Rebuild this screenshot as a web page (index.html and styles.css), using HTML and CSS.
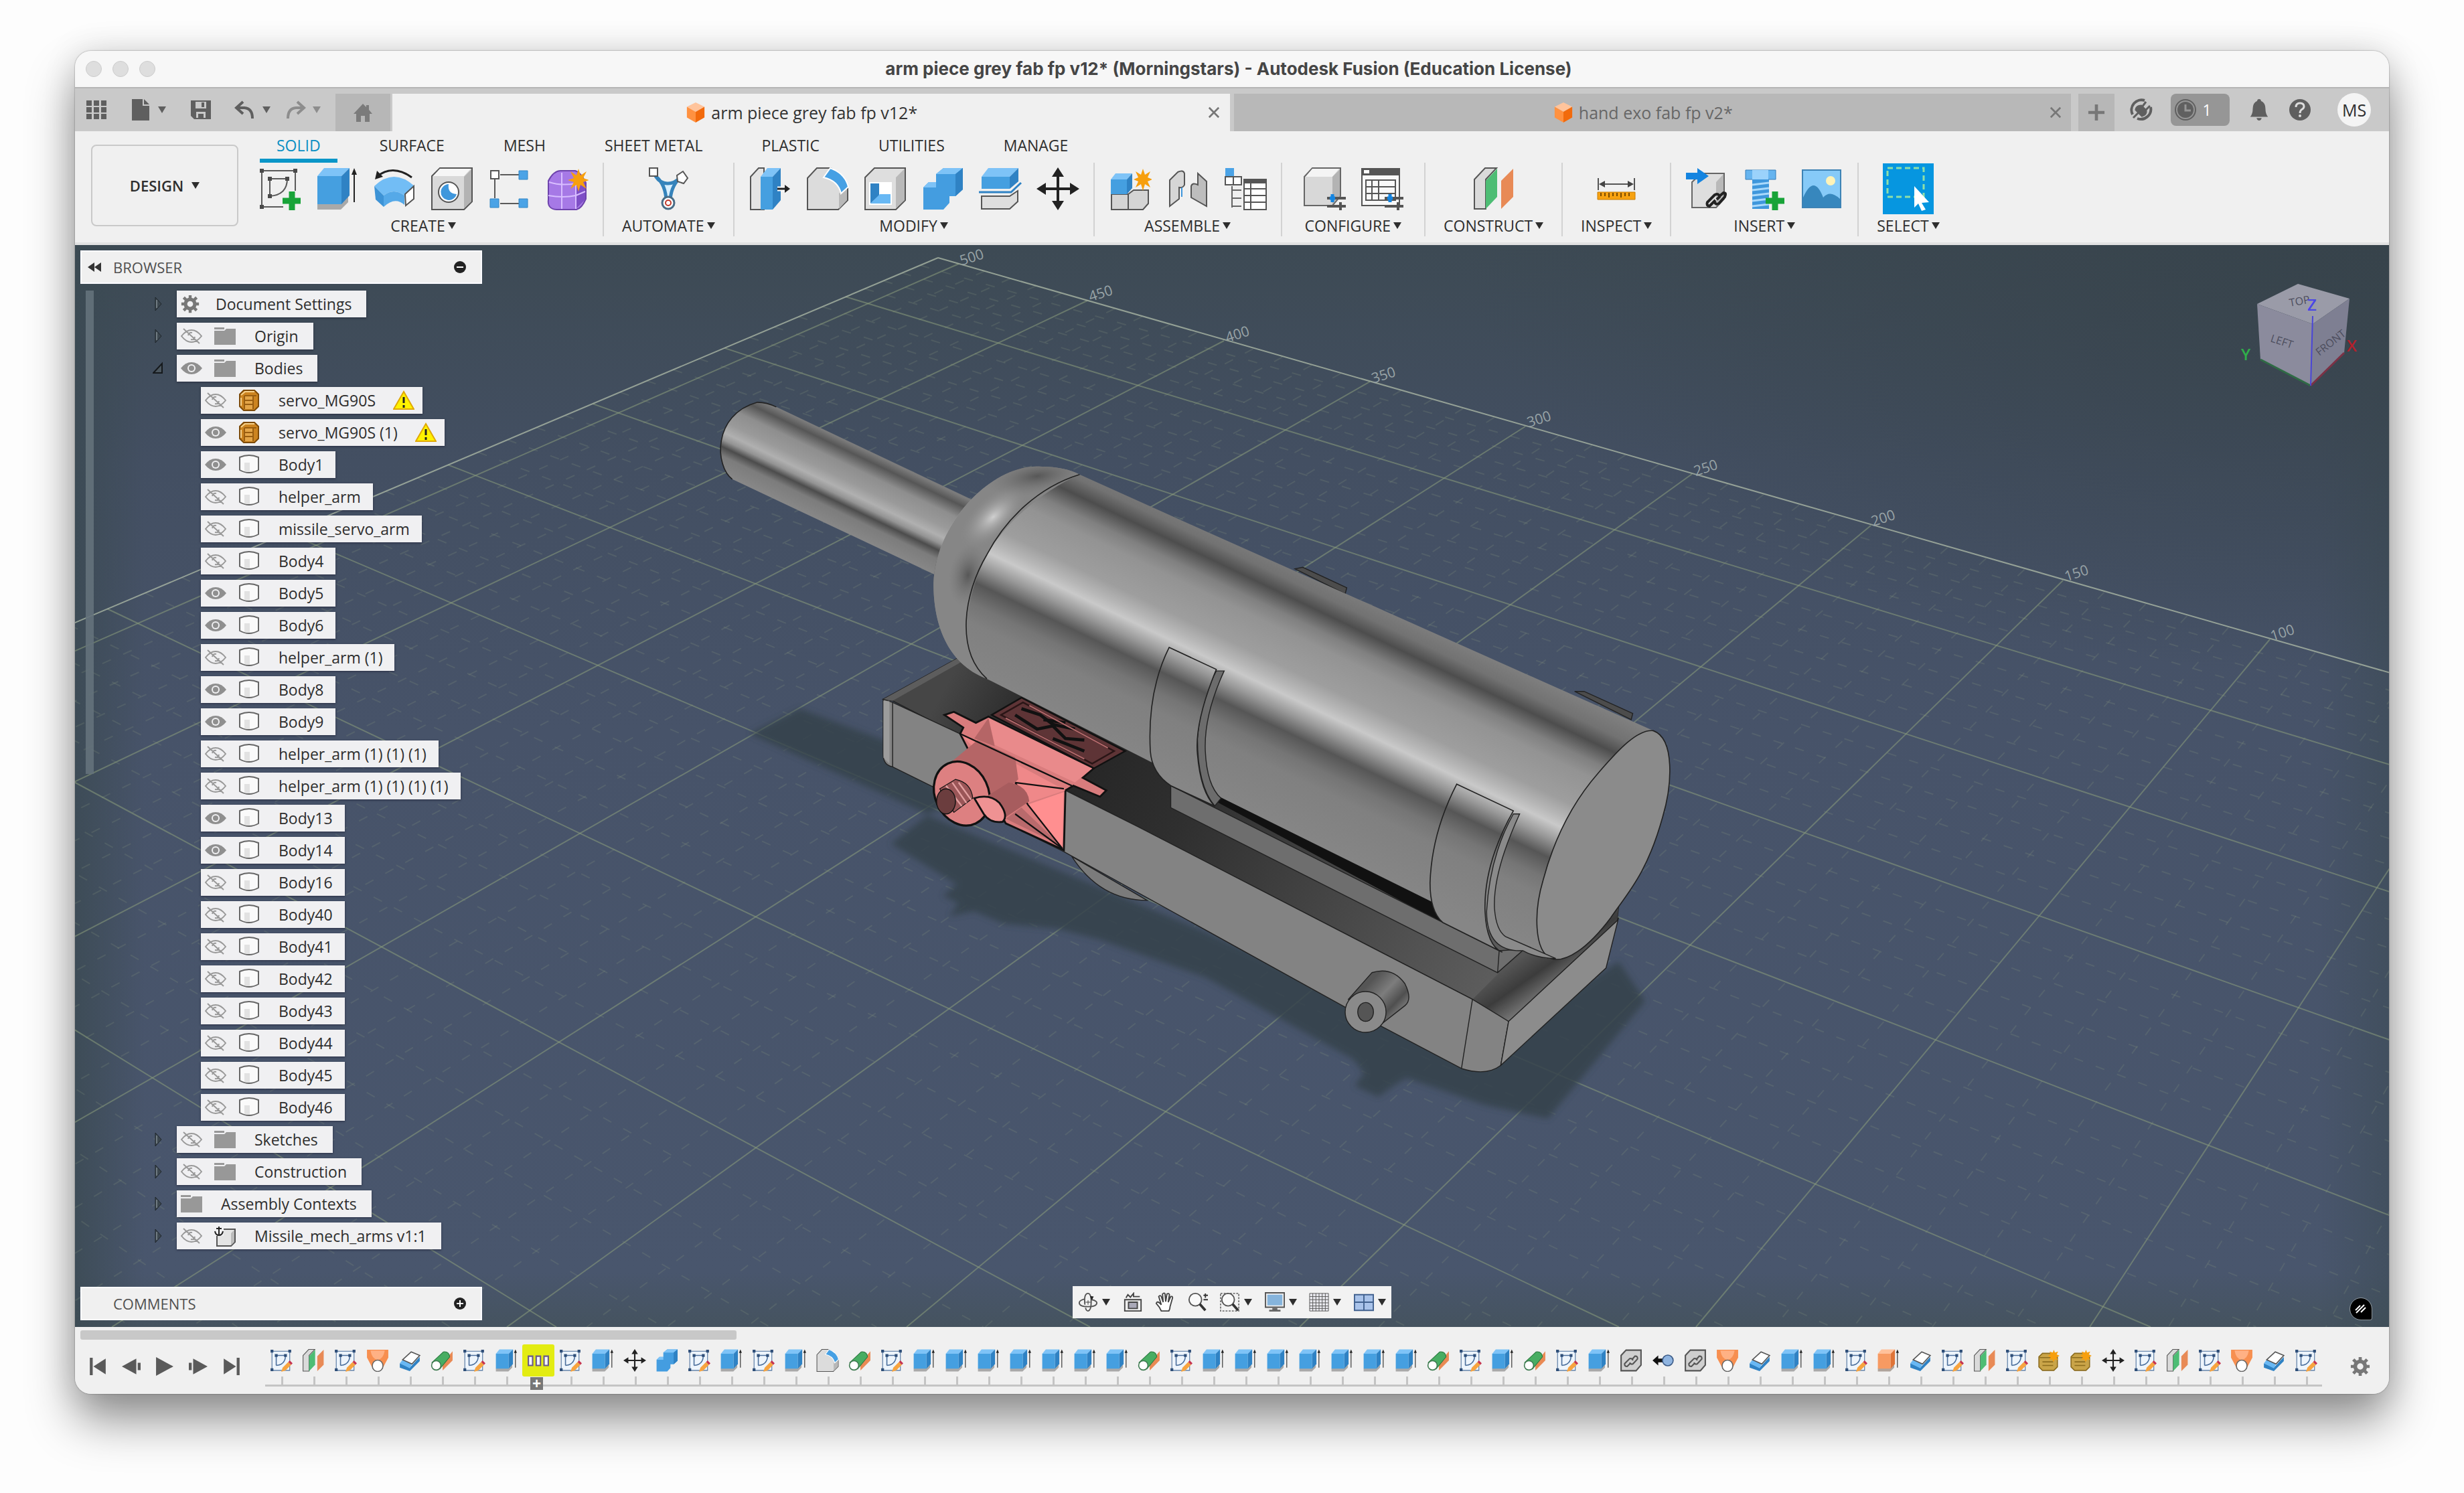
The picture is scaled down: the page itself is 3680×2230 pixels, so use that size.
FILE: index.html
```html
<!DOCTYPE html>
<html lang="en">

<head>
    <meta charset="UTF-8">
    <meta name="viewport" content="width=device-width, initial-scale=1.0">
    <title>Autodesk Fusion (Education License)</title>
    <link rel="stylesheet" href="styles.css">
    <script src="script.js" defer></script>
</head>

<body>
    <!-- icon sprite -->
    <svg class="sprite" aria-hidden="true">
        <symbol id="grid9" viewBox="0 0 32 32"><path fill="#5f5f5f" d="M1 2h8v8H1zM12 2h8v8h-8zM23 2h8v8h-8zM1 12h8v8H1zM12 12h8v8h-8zM23 12h8v8h-8zM1 22h8v8H1zM12 22h8v8h-8zM23 22h8v8h-8z"/></symbol>
        <symbol id="file" viewBox="0 0 32 32"><path fill="#5f5f5f" d="M3 0h16v10h10v22H3zM21 0l8 8h-8z"/></symbol>
        <symbol id="save" viewBox="0 0 32 32"><path fill="#5f5f5f" d="M1 2h30v28H6l-5-5z"/><path fill="#c9c9c9" d="M8 4h16v10H8zM9 19h14v9H9z"/><path fill="#5f5f5f" d="M17 5h4v7h-4zM12 22h8v6h-8z"/></symbol>
        <symbol id="undo" viewBox="0 0 32 32"><path d="M13 4L3 13l10 9M4 13h11q12 1 12 16" fill="none" stroke="currentColor" stroke-width="4"/></symbol>
        <symbol id="redo" viewBox="0 0 32 32"><path d="M19 4l10 9-10 9M28 13H17Q5 14 5 29" fill="none" stroke="currentColor" stroke-width="4"/></symbol>
        <symbol id="home" viewBox="0 0 32 32"><path fill="#7b7b7b" d="M16 3l5 5V5h4v7l5 6h-4v12h-7v-9h-6v9H6V18H2z"/></symbol>
        <symbol id="doc" viewBox="0 0 32 34"><path fill="#ffc49c" d="M16 1l14 7-14 8L2 8z"/><path fill="#ff9140" d="M2 8l14 8v17L2 25z"/><path fill="#f26a0c" d="M30 8l-14 8v17l14-8z"/></symbol>
        <symbol id="cross" viewBox="0 0 20 20"><path d="M2 2l16 16M18 2L2 18" stroke="#777" stroke-width="3"/></symbol>
        <symbol id="plus" viewBox="0 0 28 28"><path d="M14 1v26M1 14h26" stroke="#777" stroke-width="5"/></symbol>
        <symbol id="plug" viewBox="0 0 34 34"><path d="M31 13a15 15 0 0 1-20 17M4 24A15 15 0 0 1 22 3" fill="none" stroke="#5f5f5f" stroke-width="4"/><path d="M9 17l9 9q7-2 6-8l-7-7q-7 0-8 6zM18 13l6-8M23 18l7-7M5 29l7-7" fill="#5f5f5f" stroke="#5f5f5f" stroke-width="3"/></symbol>
        <symbol id="clock" viewBox="0 0 34 34"><circle cx="17" cy="17" r="15" fill="none" stroke="#606060" stroke-width="2"/><circle cx="17" cy="17" r="12" fill="#606060"/><path d="M17 9v9h8" fill="none" stroke="#969696" stroke-width="3"/></symbol>
        <symbol id="bell" viewBox="0 0 32 36"><path fill="#5f5f5f" d="M16 1q3 0 3 3 7 3 7 12 0 9 4 13H2q4-4 4-13 0-9 7-12 0-3 3-3zM12 31h8q-1 4-4 4t-4-4z"/></symbol>
        <symbol id="help" viewBox="0 0 34 34"><circle cx="17" cy="17" r="16" fill="#5f5f5f"/><path d="M11 13q0-6 6-6t6 5q0 3-4 5-2 2-2 5" fill="none" stroke="#dcdcdc" stroke-width="3"/><circle cx="17" cy="26" r="2" fill="#dcdcdc"/></symbol>

        <symbol id="sketch-new" viewBox="0 0 64 64"><path d="M6 5h50v30M6 5v54h32M18 17h26M18 17v26q26-2 26-26" fill="none" stroke="#5a5a5a" stroke-width="2"/><path fill="#4a4a4a" d="M3 2h6v6H3zM53 2h6v6h-6zM3 56h6v6H3zM15 14h6v6h-6zM41 14h6v6h-6zM15 40h6v6h-6z"/><path d="M51 36v28M37 50h28" stroke="#18a338" stroke-width="9"/></symbol>
        <symbol id="extrude" viewBox="0 0 64 64"><path fill="#a9a9a9" d="M3 54h34l12-12v10L38 63H3z"/><path fill="#459fe0" d="M3 13h36v42H3z"/><path fill="#7ec3f7" d="M3 13L13 1h38L39 13z"/><path fill="#2f82c4" d="M39 13L51 1v41L39 55z"/><path d="M58 52V6" stroke="#222" stroke-width="2"/><path d="M54 11l4-10 4 10z" fill="#222"/></symbol>
        <symbol id="extrude-cut" viewBox="0 0 64 64"><path fill="#b0a49c" d="M3 54h34l12-12v10L38 63H3z"/><path fill="#f79a62" d="M3 13h36v42H3z"/><path fill="#ffc19b" d="M3 13L13 1h38L39 13z"/><path fill="#df7438" d="M39 13L51 1v41L39 55z"/><path d="M58 52V6" stroke="#222" stroke-width="2"/><path d="M54 11l4-10 4 10z" fill="#222"/></symbol>
        <symbol id="revolve" viewBox="0 0 64 64"><path fill="#72bdf5" d="M2 28q29-28 60 0L47 42q-16-12-31 0z"/><path fill="#3d93d6" d="M2 28l14 14v17L4 48z"/><path fill="#55a9e8" d="M16 42q15-12 31 0v14q-14-13-31 3z"/><path fill="#fff" stroke="#555" stroke-width="2" d="M48 40l13-12v19L49 57z"/><path d="M7 13Q30-5 58 15" fill="none" stroke="#222" stroke-width="3"/><path d="M3 18l3-13 9 9z" fill="#222"/></symbol>
        <symbol id="hole" viewBox="0 0 64 64"><path fill="#d9d9d9" stroke="#555" stroke-width="2" d="M2 13L14 1h48v50L50 63H2z"/><path fill="#f6f6f6" d="M4 13L14 2h46L50 13z"/><path fill="#b3b3b3" d="M50 14L61 3v48L50 61z"/><circle cx="27" cy="37" r="15" fill="#fff" stroke="#555" stroke-width="2"/><path fill="#3f97dc" d="M27 25a12 12 0 1 0 12 15q-14-1-12-15z"/></symbol>
        <symbol id="pattern" viewBox="0 0 64 64"><path d="M10 18v28M18 11h28M18 54h28" stroke="#5a5a5a" stroke-width="2"/><path fill="#fff" stroke="#555" stroke-width="2" d="M4 5h12v12H4z"/><path fill="#4ba3e6" stroke="#3386c4" d="M46 5h13v13H46zM3 47h13v13H3zM46 47h13v13H46z"/></symbol>
        <symbol id="form" viewBox="0 0 64 64"><path fill="#a679e6" stroke="#6d43ac" stroke-width="2" d="M4 20Q12 5 22 5h22q8 2 16 18v24q-6 14-14 16H16Q2 62 4 48z"/><path fill="#7e4fc6" d="M45 26l14-6v28l-14 14z"/><path d="M5 22q18 6 40 2v38M24 8v54M4 42q22 4 41 0l14-6" fill="none" stroke="#d8bdff" stroke-width="2"/><path fill="#f79f0e" d="M49 2l3 10 9-6-5 10 9 3-9 3 5 10-9-6-3 10-3-10-9 6 5-10-9-3 9-3-5-10 9 6z"/></symbol>
        <symbol id="automate" viewBox="0 0 64 64"><path d="M13 13q8 12 19 11 9 0 17-8-14 14-14 36h-6Q29 26 13 13z" fill="#d8efff" stroke="#3583bb" stroke-width="5"/><path fill="#fff" stroke="#555" stroke-width="2" d="M4 1h12v12H4zM54 6l7 10-6 8-9-3-1-9z"/><circle cx="32" cy="53" r="9" fill="#fff" stroke="#4a6d87" stroke-width="3"/><circle cx="32" cy="53" r="4" fill="#fff" stroke="#c0392b" stroke-width="2"/></symbol>
        <symbol id="press" viewBox="0 0 64 64"><path fill="#e4e4e4" stroke="#555" stroke-width="2" d="M3 14L15 1h8v62H3z"/><path fill="#459fe0" d="M18 14h18v49H18z"/><path fill="#7ec3f7" d="M18 14L28 1h20L36 14z"/><path fill="#2f82c4" d="M36 14L48 1v48L36 63z"/><path d="M43 32h12" stroke="#fff" stroke-width="7"/><path d="M43 32h14" stroke="#222" stroke-width="3"/><path fill="#222" d="M54 26l8 6-8 6z"/></symbol>
        <symbol id="fillet" viewBox="0 0 64 64"><path fill="#dcdcdc" stroke="#555" stroke-width="2" d="M2 16L16 1h20q22 10 26 28v20L48 63H2z"/><path fill="#b8b8b8" d="M49 39l12-10v20L49 62z"/><path fill="#46a0e4" stroke="#fff" stroke-width="2" d="M26 15L36 1q22 8 27 28L52 39Q48 20 26 15z"/></symbol>
        <symbol id="shell" viewBox="0 0 64 64"><path fill="#dedede" stroke="#555" stroke-width="2" d="M2 15L16 1h46v48L48 63H2z"/><path fill="#b9b9b9" d="M48 15L61 2v47L48 61z"/><path fill="#fff" d="M8 22h34v34H8z"/><path fill="#2f82c4" d="M10 24h13v18l-13 12z"/><path fill="#68b8f4" d="M10 54l14-14h16v14z"/></symbol>
        <symbol id="combine" viewBox="0 0 64 64"><path fill="#449de0" d="M3 30l8-8h11V10l11-9h29v32l-11 10H42v10L33 63H3z"/><path fill="#7ec3f7" d="M22 10l11-9h29l-11 9zM3 30l8-8h11v8z"/><path fill="#2f82c4" d="M51 10l11-9v32l-11 10z"/></symbol>
        <symbol id="split" viewBox="0 0 64 64"><path fill="#dedede" stroke="#555" stroke-width="2" d="M4 43h42l12-8v16L46 62H4z"/><path fill="#459fe0" d="M4 14h42v18H4z"/><path fill="#7ec3f7" d="M4 14L14 1h45L46 14z"/><path fill="#2f82c4" d="M46 14L59 1v20L46 32z"/><path d="M0 37h48l15-14" fill="none" stroke="#2f82c4" stroke-width="3"/></symbol>
        <symbol id="move" viewBox="0 0 64 64"><path d="M32 10v44M10 32h44" stroke="#222" stroke-width="4"/><path fill="#222" d="M32 0l9 14H23zM32 64l9-14H23zM0 32l14-9v18zM64 32l-14-9v18z"/></symbol>
        <symbol id="component" viewBox="0 0 64 64"><path fill="#d4d4d4" stroke="#555" stroke-width="2" d="M4 40h25l8-6h22v20l-8 9H4zM29 40v23"/><path fill="#459fe0" d="M3 18h24v22H3z"/><path fill="#7ec3f7" d="M3 18l7-9h25l-8 9z"/><path fill="#2f82c4" d="M27 18l8-9v22l-8 9z"/><path fill="#f79f0e" d="M51 2l3 9 8-5-4 9 7 3-7 3 4 9-8-5-3 10-3-10-8 5 4-9-7-3 7-3-4-9 8 5z"/></symbol>
        <symbol id="joint" viewBox="0 0 64 64"><path fill="#d6d6d6" stroke="#555" stroke-width="2" d="M5 19l12-12q8-4 10 2v17q-2 5-8 4v17L5 58z"/><path fill="#bdbdbd" stroke="#555" stroke-width="2" d="M60 58V21L47 9v17q-8-4-10 2v17z"/><path d="M23 30v14" stroke="#3f97dc" stroke-width="2"/></symbol>
        <symbol id="bom" viewBox="0 0 64 64"><path fill="#4ba3e6" d="M2 1h13v13H2z"/><path fill="#fff" stroke="#555" stroke-width="2" d="M2 14h12v12H2zM14 14h12v12H14z"/><path d="M12 28v32M12 34h14M12 46h14M12 58h14" stroke="#666" stroke-width="2"/><path fill="#fff" stroke="#555" stroke-width="2" d="M30 18h33v45H30zM40 20v42M30 32h32M30 42h32M30 52h32"/><path fill="#555" d="M29 17h35v7H29z"/></symbol>
        <symbol id="config" viewBox="0 0 64 64"><path fill="#d8d8d8" stroke="#666" stroke-width="2" d="M2 14L14 1h42v42L44 57H2z"/><path fill="#f4f4f4" d="M4 14L14 2h40L44 14z"/><path fill="#b3b3b3" d="M44 14L55 3v40L44 55z"/><path d="M36 46h28M36 58h28M56 52v12" stroke="#555" stroke-width="4"/><path d="M40 46h8M44 40v12" stroke="#1484e0" stroke-width="5"/></symbol>
        <symbol id="config-table" viewBox="0 0 64 64"><path fill="#f8f8f8" stroke="#555" stroke-width="2" d="M2 3h56v54H2z"/><path fill="#555" d="M1 1h58v11H1z"/><path fill="#fff" d="M5 4h8v5H5z"/><path d="M8 19h44v30H8zM8 29h44M8 39h44M17 19v30M27 19v30" fill="none" stroke="#555" stroke-width="2"/><path d="M36 46h28M36 58h28M56 52v12" stroke="#555" stroke-width="4"/><path d="M40 46h8M44 40v12" stroke="#1484e0" stroke-width="5"/></symbol>
        <symbol id="plane" viewBox="0 0 64 64"><path fill="#dadada" stroke="#555" stroke-width="2" d="M3 18L19 1h17L20 18v44H3z"/><path fill="#4dbd74" d="M20 20L37 2v42L20 62z"/><path fill="#e88a56" d="M43 20L61 2v42L43 62z"/></symbol>
        <symbol id="measure" viewBox="0 0 64 64"><path d="M5 16v18M59 16v18M8 25h48" stroke="#555" stroke-width="2"/><path fill="#444" d="M6 25l9-5v10zM58 25l-9-5v10z"/><path fill="#f7a211" stroke="#c77a00" d="M4 37h56v11H4z"/><path d="M9 38v5M15 38v5M21 38v7M27 38v5M33 38v5M39 38v7M45 38v5M51 38v5" stroke="#7a4b00" stroke-width="2"/></symbol>
        <symbol id="derive" viewBox="0 0 64 64"><path fill="#dedede" stroke="#666" stroke-width="2" d="M10 22L24 9h34v38L46 60H10z"/><path fill="#b9b9b9" d="M46 22l11-12v37L46 58z"/><path fill="#1484e0" d="M1 8h17V1l17 12-17 12v-7H1z"/><path d="M45 49l-9 9q-5-1-3-6l11-11q6-3 7 3l-4 4M44 52q1 4 6 2l9-10q3-6-2-6l-6 5" fill="none" stroke="#222" stroke-width="4"/></symbol>
        <symbol id="bolt" viewBox="0 0 64 64"><path fill="#66b4ef" stroke="#347db8" d="M4 4h45v14H4z"/><path fill="#9bd2fb" d="M14 4h24v14H14z"/><path fill="#3f97dc" d="M14 18h25v44H14z"/><path d="M14 26l25-3M14 34l25-3M14 42l25-3M14 50l25-3M14 58l25-3" stroke="#a9d9fb" stroke-width="3"/><path d="M48 36v28M34 50h28" stroke="#18a338" stroke-width="9"/></symbol>
        <symbol id="picture" viewBox="0 0 64 64"><path fill="#86caf8" stroke="#3d83b5" stroke-width="2" d="M3 4h57v56H3z"/><circle cx="45" cy="20" r="7" fill="#fff3b8"/><path fill="#3787bd" d="M4 45q16-36 30 0 10-12 25 2v12H4z"/></symbol>
        <symbol id="select" viewBox="0 0 76 76"><path fill="#0696e0" d="M0 0h76v76H0z"/><path d="M7 7h54v43H7z" fill="none" stroke="#8fdfa8" stroke-width="3" stroke-dasharray="8 5"/><path fill="#fff" d="M47 34l22 24-11 1 6 10-6 2-5-11-6 6z"/></symbol>

        <symbol id="sketch" viewBox="0 0 64 64"><path fill="#eef5fc" stroke="#4b6f9c" stroke-width="2" d="M6 6h50v54H6z"/><path d="M18 18h26M18 18v28M18 46q26-2 26-28" fill="none" stroke="#4b6f9c" stroke-width="3"/><path fill="#2e4e78" d="M2 2h8v8H2zM52 2h8v8h-8zM2 54h8v8H2zM14 14h8v8h-8zM40 14h8v8h-8z"/><path fill="#f7a440" d="M36 52l16-16 8 8-16 16-12 4z"/><path fill="#c63350" d="M52 36l4-4 8 8-4 4z"/></symbol>
        <symbol id="loft" viewBox="0 0 64 64"><path fill="#f78f50" d="M2 2h60v22L46 54H18L2 24z"/><path fill="#ffb184" d="M12 4h40q-4 24-20 26Q16 28 12 4z"/><ellipse cx="32" cy="47" rx="15" ry="16" fill="#fff" stroke="#666" stroke-width="3"/></symbol>
        <symbol id="thicken" viewBox="0 0 64 64"><path fill="#2f82c4" d="M4 40l28 12 28-30v12L32 62 4 52z"/><path fill="#68b8f4" d="M4 40l8-10 26 12-6 12z"/><path fill="#fff" stroke="#555" stroke-width="3" d="M12 30L36 8l24 10-22 24z"/></symbol>
        <symbol id="axis" viewBox="0 0 64 64"><path fill="#e98a54" d="M34 40L62 6v26L34 60z"/><path fill="#48ad62" stroke="#2b7b40" stroke-width="2" d="M4 38L36 8q16-2 18 14L26 56z"/><circle cx="16" cy="46" r="13" fill="#fff" stroke="#3d7a50" stroke-width="3"/></symbol>
        <symbol id="link" viewBox="0 0 64 64"><path fill="#cfcfcf" stroke="#555" stroke-width="4" d="M4 18L18 3h42v42L46 61H4z"/><path d="M30 40l-9 9q-8 0-7-8l14-14q8-2 9 5M34 30l9-10q8-1 7 8L37 42q-6 2-9-4" fill="none" stroke="#555" stroke-width="4"/></symbol>
        <symbol id="snap" viewBox="0 0 64 64"><path fill="#111" d="M2 32l16-14v9h14v10H18v9z"/><circle cx="45" cy="32" r="15" fill="#8fb4e0" stroke="#3b5a86" stroke-width="3"/></symbol>
        <symbol id="base" viewBox="0 0 64 64"><path fill="#c9a448" stroke="#8c6c1e" stroke-width="3" d="M4 22l10-10h30l12 10v28L46 60H14L4 50z"/><path d="M6 24h48M14 36h30M14 46h30" stroke="#8c6c1e" stroke-width="3"/><path fill="#f79f0e" d="M46 2l3 8 9-3-4 8 8 4-8 4 3 8-8-3-4 8-4-8-8 3 4-8-8-4 8-4-3-8 9 3z"/></symbol>
        <symbol id="repeat" viewBox="0 0 64 64"><path fill="#f7f7ff" stroke="#6a5a8a" stroke-width="4" d="M4 20h12v26H4zM26 20h12v26H26zM48 20h12v26H48z"/></symbol>

        <symbol id="eye" viewBox="0 0 32 32"><path fill="#8f8f8f" d="M0 16Q7 7 16 7t16 9q-7 9-16 9T0 16z"/><circle cx="16" cy="16" r="6" fill="#f0f0f2"/><circle cx="16" cy="16" r="4" fill="#8f8f8f"/></symbol>
        <symbol id="eye-off" viewBox="0 0 32 32"><path d="M1 16q7-9 15-9t15 9q-7 9-15 9T1 16zM11 15q1-5 6-4M21 17q-1 5-6 4M4 5l24 22" fill="none" stroke="#999" stroke-width="2"/></symbol>
        <symbol id="folder" viewBox="0 0 32 32"><path fill="#989898" d="M0 3h15v3H0zM0 8h15l3-3h14v24H0z"/></symbol>
        <symbol id="gear" viewBox="0 0 32 32"><circle cx="16" cy="16" r="8" fill="none" stroke="#777" stroke-width="6"/><path d="M16 1v6M16 25v6M1 16h6M25 16h6M5 5l5 5M22 22l5 5M27 5l-5 5M10 22l-5 5" stroke="#777" stroke-width="5"/></symbol>
        <symbol id="body" viewBox="0 0 32 32"><path fill="#fafafa" stroke="#666" stroke-width="2" d="M2 5q14-6 28 0v19q-14 8-28 0z"/><path fill="#e2e2e2" d="M9 13h8v14q-5 0-8-1z"/></symbol>
        <symbol id="mesh" viewBox="0 0 32 32"><path fill="#cc8420" stroke="#7d4a08" stroke-width="2" d="M8 1h16l6 6v18l-6 6H8l-6-6V7z"/><path fill="#e3a548" d="M9 9h13v20H9z"/><path d="M9 9h18M9 9v20M9 16h13M9 22h13M22 9v20" fill="none" stroke="#9a5e10" stroke-width="2"/><path d="M4 8l6-5h14M4 12v12" fill="none" stroke="#f7d28c" stroke-width="2"/></symbol>
        <symbol id="ground" viewBox="0 0 32 32"><path fill="#e4e4e4" stroke="#555" stroke-width="2" d="M4 12l6-6h21v19l-6 6H4z"/><path fill="#bbb" d="M25 12l5-5v18l-5 5z"/><path fill="#f0f0f2" d="M0 0h14v16H0z"/><path d="M7 2v13M3 5h8M1 9q1 6 6 6t6-6" fill="none" stroke="#222" stroke-width="2"/></symbol>
        <symbol id="warn" viewBox="0 0 32 32"><path fill="#fff200" stroke="#e0a800" stroke-width="2" d="M16 3l15 26H1z"/><path d="M16 11v9M16 23v4" stroke="#222" stroke-width="3"/></symbol>
        <symbol id="closed" viewBox="0 0 16 24"><path d="M4 2l9 10-9 10z" fill="#3c474f" stroke="#1f262b"/><path d="M6 6v12" stroke="#a4b0b5"/></symbol>
        <symbol id="opened" viewBox="0 0 16 24"><path d="M14 5v14H1z" fill="#4a555d" stroke="#15191c" stroke-width="2"/></symbol>
        <symbol id="rewind" viewBox="0 0 20 16"><path fill="#333" d="M10 1v14L0 8zM20 1v14L10 8z"/></symbol>
        <symbol id="minus-dot" viewBox="0 0 20 20"><circle cx="10" cy="10" r="9" fill="#222"/><path d="M5 10h10" stroke="#fff" stroke-width="2"/></symbol>
        <symbol id="plus-dot" viewBox="0 0 20 20"><circle cx="10" cy="10" r="9" fill="#222"/><path d="M5 10h10M10 5v10" stroke="#fff" stroke-width="2"/></symbol>

        <symbol id="first" viewBox="0 0 26 26"><path fill="#5a5a5a" d="M2 1h4v24H2zM24 2v22L7 13z"/></symbol>
        <symbol id="back" viewBox="0 0 26 26"><path fill="#5a5a5a" d="M20 2v22L0 13zM22 8h4v10h-4z"/></symbol>
        <symbol id="play" viewBox="0 0 26 26"><path fill="#5a5a5a" d="M1 0l24 13L1 26z"/></symbol>
        <symbol id="next" viewBox="0 0 26 26"><path fill="#5a5a5a" d="M6 2v22l20-11zM0 8h4v10H0z"/></symbol>
        <symbol id="last" viewBox="0 0 26 26"><path fill="#5a5a5a" d="M20 1h4v24h-4zM2 2v22l17-11z"/></symbol>

        <symbol id="orbit" viewBox="0 0 32 32"><path d="M22 12q8 2 8 5 0 6-14 6T2 17q0-4 8-6" fill="none" stroke="#555" stroke-width="2"/><path d="M11 20q-2-18 5-18 5 0 5 14 0 13-5 14-3 0-4-5" fill="none" stroke="#555" stroke-width="2"/><path d="M16 13v7M12 16h8" stroke="#333"/><path fill="#222" d="M19 6l6 1-3 6z"/></symbol>
        <symbol id="look" viewBox="0 0 32 32"><path d="M3 12h26v18H3z" fill="#eee" stroke="#444" stroke-width="2"/><path d="M9 16h14v10H9z" fill="#aaa9b8" stroke="#444" stroke-width="2"/><path d="M5 9l3-5 4 4 5-6v5h10" fill="none" stroke="#444" stroke-width="2"/></symbol>
        <symbol id="hand" viewBox="0 0 32 32"><path d="M10 30q-3-7-8-12 1-4 5-1l3 3L6 7q2-3 4 0l3 9-1-13q3-3 4 0l1 12 2-12q3-2 4 1l-2 12 4-9q3-1 3 2l-4 14q0 4-2 7z" fill="#fff" stroke="#444" stroke-width="2"/></symbol>
        <symbol id="zoom" viewBox="0 0 32 32"><circle cx="12" cy="12" r="10" fill="#fafafa" stroke="#555" stroke-width="2"/><path d="M19 19l9 10" stroke="#333" stroke-width="4"/><path d="M25 5h7M28 2v7M25 12h7" stroke="#333" stroke-width="2"/></symbol>
        <symbol id="fit" viewBox="0 0 32 32"><path d="M1 2h29v28H1z" fill="none" stroke="#777" stroke-width="2" stroke-dasharray="3 2"/><circle cx="13" cy="12" r="10" fill="#fafafa" stroke="#555" stroke-width="2"/><path d="M20 19l9 10" stroke="#333" stroke-width="4"/></symbol>
        <symbol id="display" viewBox="0 0 32 32"><path d="M1 1h30v23H1z" fill="#eee" stroke="#555" stroke-width="2"/><path d="M4 4h24v17H4z" fill="#86b4dc"/><path d="M12 25h8v3h5v3H7v-3h5z" fill="#666"/></symbol>
        <symbol id="mesh-grid" viewBox="0 0 32 32"><path fill="#e9e9ee" d="M1 2h30v28H1z"/><path d="M1 2h30v28H1zM6 2v28M11 2v28M16 2v28M21 2v28M26 2v28M1 7h30M1 12h30M1 17h30M1 22h30M1 26h30" fill="none" stroke="#555"/></symbol>
        <symbol id="views" viewBox="0 0 32 32"><path d="M1 4h30v25H1zM16 4v25M1 16h30" fill="#a9c3ea" stroke="#41618f" stroke-width="2"/></symbol>
    </svg>

    <main class="window">
        <header class="titlebar">
            <div class="lights"><i></i><i></i><i></i></div>
            <h1>arm piece grey fab fp v12* (Morningstars) - Autodesk Fusion (Education License)</h1>
        </header>

        <div class="strip">
            <div class="quick">
                <button type="button" aria-label="Data panel"><svg><use href="#grid9"/></svg></button>
                <button type="button" class="drop" aria-label="File"><svg><use href="#file"/></svg><b class="caret"></b></button>
                <button type="button" aria-label="Save"><svg><use href="#save"/></svg></button>
                <button type="button" class="step" aria-label="Undo"><svg><use href="#undo"/></svg><b class="caret"></b></button>
                <button type="button" class="step dim" aria-label="Redo"><svg><use href="#redo"/></svg><b class="caret"></b></button>
            </div>
            <button type="button" class="tile home" aria-label="Home"><svg><use href="#home"/></svg></button>
            <div class="file-tab active">
                <svg class="doc"><use href="#doc"/></svg><span>arm piece grey fab fp v12*</span>
                <button type="button" class="close" aria-label="Close"><svg><use href="#cross"/></svg></button>
            </div>
            <div class="file-tab">
                <svg class="doc"><use href="#doc"/></svg><span>hand exo fab fp v2*</span>
                <button type="button" class="close" aria-label="Close"><svg><use href="#cross"/></svg></button>
            </div>
            <button type="button" class="tile new" aria-label="New design"><svg><use href="#plus"/></svg></button>
            <div class="account">
                <button type="button" aria-label="Extensions"><svg><use href="#plug"/></svg></button>
                <button type="button" class="jobs"><svg><use href="#clock"/></svg>1</button>
                <button type="button" aria-label="Notifications"><svg><use href="#bell"/></svg></button>
                <button type="button" aria-label="Help"><svg><use href="#help"/></svg></button>
                <button type="button" class="avatar">MS</button>
            </div>
        </div>

        <div class="toolbar">
            <button type="button" class="workspace">DESIGN <b class="caret"></b></button>
            <div class="ribbon">
                <nav class="tabs">
                    <a href="#" class="on">SOLID</a>
                    <a href="#">SURFACE</a>
                    <a href="#">MESH</a>
                    <a href="#">SHEET METAL</a>
                    <a href="#">PLASTIC</a>
                    <a href="#">UTILITIES</a>
                    <a href="#">MANAGE</a>
                </nav>
                <div class="groups">
                    <div class="group">
                        <div class="icons">
                            <button type="button" aria-label="Create sketch"><svg><use href="#sketch-new"/></svg></button>
                            <button type="button" aria-label="Extrude"><svg><use href="#extrude"/></svg></button>
                            <button type="button" aria-label="Revolve"><svg><use href="#revolve"/></svg></button>
                            <button type="button" aria-label="Hole"><svg><use href="#hole"/></svg></button>
                            <button type="button" aria-label="Pattern"><svg><use href="#pattern"/></svg></button>
                            <button type="button" aria-label="Create form"><svg><use href="#form"/></svg></button>
                        </div>
                        <button type="button" class="menu">CREATE<b class="caret"></b></button>
                    </div>
                    <div class="group">
                        <div class="icons"><button type="button" aria-label="Automated modeling"><svg><use href="#automate"/></svg></button></div>
                        <button type="button" class="menu">AUTOMATE<b class="caret"></b></button>
                    </div>
                    <div class="group">
                        <div class="icons">
                            <button type="button" aria-label="Press pull"><svg><use href="#press"/></svg></button>
                            <button type="button" aria-label="Fillet"><svg><use href="#fillet"/></svg></button>
                            <button type="button" aria-label="Shell"><svg><use href="#shell"/></svg></button>
                            <button type="button" aria-label="Combine"><svg><use href="#combine"/></svg></button>
                            <button type="button" aria-label="Split body"><svg><use href="#split"/></svg></button>
                            <button type="button" aria-label="Move"><svg><use href="#move"/></svg></button>
                        </div>
                        <button type="button" class="menu">MODIFY<b class="caret"></b></button>
                    </div>
                    <div class="group">
                        <div class="icons">
                            <button type="button" aria-label="New component"><svg><use href="#component"/></svg></button>
                            <button type="button" aria-label="Joint"><svg><use href="#joint"/></svg></button>
                            <button type="button" aria-label="Bill of materials"><svg><use href="#bom"/></svg></button>
                        </div>
                        <button type="button" class="menu">ASSEMBLE<b class="caret"></b></button>
                    </div>
                    <div class="group roomy">
                        <div class="icons">
                            <button type="button" aria-label="Configure design"><svg><use href="#config"/></svg></button>
                            <button type="button" aria-label="Configuration table"><svg><use href="#config-table"/></svg></button>
                        </div>
                        <button type="button" class="menu">CONFIGURE<b class="caret"></b></button>
                    </div>
                    <div class="group">
                        <div class="icons"><button type="button" aria-label="Offset plane"><svg><use href="#plane"/></svg></button></div>
                        <button type="button" class="menu">CONSTRUCT<b class="caret"></b></button>
                    </div>
                    <div class="group">
                        <div class="icons"><button type="button" aria-label="Measure"><svg><use href="#measure"/></svg></button></div>
                        <button type="button" class="menu">INSPECT<b class="caret"></b></button>
                    </div>
                    <div class="group">
                        <div class="icons">
                            <button type="button" aria-label="Insert derive"><svg><use href="#derive"/></svg></button>
                            <button type="button" aria-label="Insert fastener"><svg><use href="#bolt"/></svg></button>
                            <button type="button" aria-label="Insert canvas"><svg><use href="#picture"/></svg></button>
                        </div>
                        <button type="button" class="menu">INSERT<b class="caret"></b></button>
                    </div>
                    <div class="group">
                        <div class="icons"><button type="button" class="big" aria-label="Select"><svg><use href="#select"/></svg></button></div>
                        <button type="button" class="menu">SELECT<b class="caret"></b></button>
                    </div>
                </div>
            </div>
        </div>

        <div class="viewport">
            <svg class="scene" viewBox="112 366 3456 1616" preserveAspectRatio="xMidYMid slice">
                <defs>
                    <linearGradient id="sky" x1="0" y1="0" x2="0" y2="1">
                        <stop offset="0" stop-color="#3d4a54"/><stop offset=".2" stop-color="#434f62"/><stop offset=".45" stop-color="#475369"/><stop offset=".95" stop-color="#49566d"/><stop offset="1" stop-color="#45535f"/>
                    </linearGradient>
                    <linearGradient id="side" x1="0" y1="0" x2="1" y2="0">
                        <stop offset="0" stop-color="#3b4a52" stop-opacity=".8"/><stop offset=".03" stop-color="#3b4a52" stop-opacity="0"/><stop offset=".97" stop-color="#3b4a52" stop-opacity="0"/><stop offset="1" stop-color="#3b4a52" stop-opacity=".5"/>
                    </linearGradient>
                    <radialGradient id="topRight" cx="1" cy="0" r=".4">
                        <stop offset="0" stop-color="#37434b"/><stop offset="1" stop-color="#37434b" stop-opacity="0"/>
                    </radialGradient>
                    <linearGradient id="tube" gradientUnits="userSpaceOnUse" x1="491" y1="258" x2="468" y2="306">
                        <stop offset="0" stop-color="#7b7b7b"/><stop offset=".1" stop-color="#565656"/><stop offset=".25" stop-color="#8e8e8e"/><stop offset=".42" stop-color="#9a9a9a"/><stop offset=".54" stop-color="#b0b0b0"/><stop offset=".62" stop-color="#949494"/><stop offset=".7" stop-color="#4c4c4c"/><stop offset=".8" stop-color="#7c7c7c"/><stop offset="1" stop-color="#888"/>
                    </linearGradient>
                    <linearGradient id="steel" gradientUnits="userSpaceOnUse" x1="1052" y1="466" x2="983" y2="610">
                        <stop offset="0" stop-color="#808080"/><stop offset=".08" stop-color="#727272"/><stop offset=".14" stop-color="#4d4d4d"/><stop offset=".21" stop-color="#808080"/><stop offset=".27" stop-color="#939393"/><stop offset=".4" stop-color="#9e9e9e"/><stop offset=".46" stop-color="#b6b6b6"/><stop offset=".5" stop-color="#c9c9c9"/><stop offset=".56" stop-color="#989898"/><stop offset=".63" stop-color="#565656"/><stop offset=".71" stop-color="#757575"/><stop offset=".78" stop-color="#808080"/><stop offset="1" stop-color="#868686"/>
                    </linearGradient>
                    <linearGradient id="deck" gradientUnits="userSpaceOnUse" x1="600" y1="440" x2="960" y2="640">
                        <stop offset="0" stop-color="#464646"/><stop offset=".16" stop-color="#222"/><stop offset=".42" stop-color="#2f2f2f"/><stop offset=".7" stop-color="#474747"/><stop offset="1" stop-color="#606060"/>
                    </linearGradient>
                    <linearGradient id="corner" gradientUnits="userSpaceOnUse" x1="972" y1="606" x2="990" y2="632">
                        <stop offset="0" stop-color="#555"/><stop offset=".45" stop-color="#3c3c3c"/><stop offset="1" stop-color="#808080"/>
                    </linearGradient>
                    <linearGradient id="peg" gradientUnits="userSpaceOnUse" x1="869" y1="628" x2="892" y2="650">
                        <stop offset="0" stop-color="#555"/><stop offset=".35" stop-color="#7d7d7d"/><stop offset=".65" stop-color="#4f4f4f"/><stop offset="1" stop-color="#999"/>
                    </linearGradient>
                    <radialGradient id="dome"><stop offset="0" stop-color="#cfcfcf"/><stop offset="1" stop-color="#8a8a8a" stop-opacity="0"/></radialGradient>
                    <radialGradient id="domeDark"><stop offset="0" stop-color="#575757"/><stop offset="1" stop-color="#777" stop-opacity="0"/></radialGradient>
                    <filter id="soft"><feGaussianBlur stdDeviation="2"/></filter>
                    <clipPath id="domeClip"><path d="M687 302C664 312 640 332 628 353C615 378 608 414 628 432C602 422 594 396 594 371C596 330 634 294 663 297Q677 297 687 302z"/></clipPath>
                </defs>
                <path fill="url(#sky)" d="M112 366h3456v1616H112z"/>
                <path fill="url(#side)" d="M112 366h3456v1616H112z"/>
                <path fill="url(#topRight)" d="M112 366h3456v1616H112z"/>
                <g id="gridLines"></g>
                <g transform="scale(2.347)">
                    <g id="gridLabels" class="grid-labels"></g>

                    <!-- cast shadows -->
                    <g fill="#36434b" opacity=".85" filter="url(#soft)">
                        <path d="M477 467L509 451L570 474L605 512L590 518z"/>
                        <path d="M567 537L590 519L760 590L940 670L1030 612L1047 637L985 712L944 703L895 686L887 691L877 698L862 691L868 683L861 674L767 622L700 598L672 591L639 588L620 580L604 583L610 575L600 570L609 563z"/>
                    </g>

                    <!-- mounting bar -->
                    <path fill="#7b7b7b" stroke="#222" stroke-width=".6" d="M682 545Q700 573 730 573z"/>
                    <path fill="url(#deck)" stroke="#222" stroke-width=".6" d="M562 445L611 418L760 470L1030 577L1029 586L960 650L937 636L568 446z"/>
                    <path fill="#5d5d5d" d="M562 445L611 418L614 420L568 446z"/>
                    <path fill="url(#corner)" d="M969 604L1030 577L1029 586L960 650L937 636z"/>
                    <path fill="#838383" stroke="#222" stroke-width=".6" d="M562 445L568 447L611 467L678 503L724 526L937 636L960 650L955 678Q946 685 930 680L856 641L677 542L568 488Q562 487 562 480z"/>
                    <path fill="#8c8c8c" stroke="#222" stroke-width=".6" d="M960 650L1029 586L1030 584L1022 616L955 678z"/>
                    <path d="M568 447v41M937 636L930 680" stroke="#222" stroke-width=".6"/>
                    <path fill="#b5b5b5" d="M562 446h4v40l-4-4z" opacity=".5"/>
                    <path fill="#111" d="M628 431L740 470L770 508L917 587L930 560L780 480z"/>
                    <path fill="#6e6e6e" stroke="#222" stroke-width=".6" d="M745 500L954 605L970 604L953 619L745 514zM954 605L953 619"/>

                    <!-- peg -->
                    <path fill="url(#peg)" stroke="#222" stroke-width=".6" d="M858 636L873 619Q886 615 894 626Q899 636 894 640L880 651z"/>
                    <ellipse cx="869" cy="644" rx="13" ry="13" fill="#8a8a8a" stroke="#222" stroke-width=".6"/>
                    <ellipse cx="869" cy="644" rx="5" ry="6" fill="#555" stroke="#222" stroke-width=".6"/>

                    <!-- tube and body -->
                    <path fill="url(#tube)" d="M466 305C455 297 453 264 482 256Q488 256 494 259L627 322L604 370z"/>
                    <path d="M466 305C455 297 453 264 482 256Q488 256 494 259" fill="none" stroke="#222" stroke-width=".7"/>
                    <path fill="#4c4c4c" stroke="#222" stroke-width=".6" d="M824 362l5-1 28 13-1 4zM1002 440l6 0 31 14-1 4z"/>
                    <path fill="url(#steel)" d="M687 302L767 338L1052 465L984 610L776 507L628 432C602 422 594 396 594 371C596 330 634 294 663 297Q677 297 687 302z"/>
                    <g clip-path="url(#domeClip)">
                        <path fill="#868686" d="M590 290h100v150H590z"/>
                        <ellipse cx="660" cy="303" rx="34" ry="12" fill="url(#domeDark)" transform="rotate(-8 660 303)"/>
                        <ellipse cx="632" cy="329" rx="26" ry="13" fill="url(#dome)" transform="rotate(-42 632 329)"/>
                        <ellipse cx="616" cy="366" rx="12" ry="20" fill="url(#domeDark)" transform="rotate(10 616 366)"/>
                    </g>
                    <path d="M687 302C661 310 640 330 628 353C613 378 608 414 628 432" fill="none" stroke="#222" stroke-width=".7"/>
                    <path fill="#8b8b8b" stroke="#222" stroke-width=".7" d="M1052 465C1066 470 1064 500 1058 520C1048 556 1036 568 1025 584C1010 604 996 613 987 610C976 605 976 580 982 560C990 530 1003 508 1017 492C1030 477 1042 464 1052 465z"/>

                    <!-- clips -->
                    <path fill="#6c6c6c" stroke="#222" stroke-width=".6" d="M774 427h5Q766 455 767 478Q768 500 777 508L773 513Q762 500 762 470Q764 445 774 427z"/>
                    <path fill="url(#steel)" stroke="#222" stroke-width=".7" d="M744 412L774 426Q760 460 762 480Q764 504 773 513L745 500Q733 492 732 478Q730 440 744 412z"/>
                    <path fill="#8a8a8a" stroke="#222" stroke-width=".6" d="M963 518h4Q950 555 951 578Q952 592 958 596L990 610Q978 610 969 605Q946 606 946 580Q948 545 963 518z"/>
                    <path fill="url(#steel)" stroke="#222" stroke-width=".7" d="M927 499L963 516Q944 550 945 580Q946 602 956 606L918 587Q910 580 910 562Q911 530 927 499z"/>

                    <!-- servo -->
                    <path fill="#5e3436" stroke="#111" d="M631 455L650 444L716 478L696 489z"/>
                    <path d="M637 455l14-8 58 31-14 8z" fill="none" stroke="#2a1516"/>
                    <path d="M650 451l12 4 8 6 14 3M646 455l14 9 10-2 8 8 12 1M664 458l14 2M670 470l20 8" fill="none" stroke="#111" stroke-width="2"/>
                    <path d="M640 457l50 26M655 449l50 27" fill="none" stroke="#b56b6d" stroke-width=".8"/>
                    <path fill="#d97c7d" stroke="#111" stroke-width="1.2" d="M601 455L607 453L621 460L629 456L696 489L689 495L704 503L700 507L683 500L678 503L677 541L640 524L611 467L613 463z"/>
                    <path fill="#e98a8b" d="M629 457L695 489L684 498L633 474z"/>
                    <path fill="#b56566" d="M620 470L629 457L633 475z"/>
                    <path fill="#ef8889" d="M611 467L678 503L654 511z"/>
                    <path fill="#ff8f90" d="M677 504L654 512L676 539z"/>
                    <path fill="#b96a6c" d="M650 514L675 538L640 521z"/>
                    <path fill="#b56566" d="M604 486L622 471L646 482L648 496L634 508z"/>
                    <path d="M611 467L682 500M646 498l31 4M646 498l8 14 22 28-30-22" fill="none" stroke="#111" stroke-width="1"/>
                    <ellipse cx="612" cy="505" rx="17" ry="21" fill="#dd8081" stroke="#111" stroke-width="1.4" transform="rotate(-25 612 505)"/>
                    <path fill="#a75c5e" d="M626 508L642 498Q654 500 655 510L640 520z"/>
                    <path fill="#ef9293" stroke="#111" stroke-width="1.2" d="M620 508q10-3 16 3 6 8 2 12-8 1-12-5z"/>
                    <path fill="#9b5658" stroke="#111" stroke-width=".5" d="M598 502l10-6q10 2 11 12l-12 9z"/>
                    <path d="M602 500l10 13M606 498l9 13M610 498l8 11" stroke="#e3a0a1"/>
                    <ellipse cx="602" cy="510" rx="6" ry="8" fill="#6b3d3e" stroke="#111" stroke-width=".6"/>
                </g>

                <!-- view cube -->
                <path fill="#9a9ba8" d="M3432 424L3509 446L3454 484L3371 454z"/>
                <path fill="#8b8b9d" d="M3371 454L3454 484L3451 576L3376 537z"/>
                <path fill="#7e7f92" d="M3454 484L3509 446L3501 527L3451 576z"/>
                <path d="M3376 537L3451 576" stroke="#2f6b45" stroke-width="3"/>
                <path d="M3501 527L3451 576" stroke="#7c3145" stroke-width="3"/>
                <path d="M3454 472L3451 576" stroke="#4a46d6" stroke-width="2"/>
                <g class="cube-text">
                    <text x="3420" y="458" transform="rotate(-10 3420 458)">TOP</text>
                    <text x="3390" y="510" transform="rotate(18 3390 510)">LEFT</text>
                    <text x="3464" y="532" transform="rotate(-38 3464 532)">FRONT</text>
                </g>
                <g class="axis-text">
                    <text x="3446" y="464" fill="#4a46e6">Z</text>
                    <text x="3347" y="538" fill="#2fae4a">Y</text>
                    <text x="3505" y="525" fill="#b3202c">X</text>
                </g>
            </svg>

            <aside class="panels">
                <div class="panel-head">
                    <button type="button" aria-label="Collapse"><svg><use href="#rewind"/></svg></button>
                    <h2>BROWSER</h2>
                    <button type="button" aria-label="Hide browser"><svg><use href="#minus-dot"/></svg></button>
                </div>
                <div class="browser">
                    <div class="rail"></div>
                    <ul id="tree"></ul>
                </div>
                <div class="panel-head comments">
                    <h2>COMMENTS</h2>
                    <button type="button" aria-label="Add comment"><svg><use href="#plus-dot"/></svg></button>
                </div>
            </aside>

            <div class="navbar">
                <button type="button" aria-label="Orbit"><svg><use href="#orbit"/></svg><b class="caret"></b></button>
                <button type="button" aria-label="Look at"><svg><use href="#look"/></svg></button>
                <button type="button" aria-label="Pan"><svg><use href="#hand"/></svg></button>
                <button type="button" aria-label="Zoom"><svg><use href="#zoom"/></svg></button>
                <button type="button" aria-label="Fit"><svg><use href="#fit"/></svg><b class="caret"></b></button>
                <button type="button" aria-label="Display settings"><svg><use href="#display"/></svg><b class="caret"></b></button>
                <button type="button" aria-label="Grid and snaps"><svg><use href="#mesh-grid"/></svg><b class="caret"></b></button>
                <button type="button" aria-label="Viewports"><svg><use href="#views"/></svg><b class="caret"></b></button>
            </div>
            <button type="button" class="assistant" aria-label="Assistant"><svg viewBox="0 0 32 32"><path d="M8 18l7-7M9 22l12-12M16 21l7-7" stroke="#fff" stroke-width="2"/></svg></button>
        </div>

        <footer class="timeline">
            <div class="scroll"></div>
            <div class="track">
                <div class="player">
                    <button type="button" aria-label="Start"><svg><use href="#first"/></svg></button>
                    <button type="button" aria-label="Step back"><svg><use href="#back"/></svg></button>
                    <button type="button" aria-label="Play"><svg><use href="#play"/></svg></button>
                    <button type="button" aria-label="Step forward"><svg><use href="#next"/></svg></button>
                    <button type="button" aria-label="End"><svg><use href="#last"/></svg></button>
                </div>
                <ol id="features"></ol>
                <button type="button" class="settings" aria-label="Timeline settings"><svg><use href="#gear"/></svg></button>
            </div>
        </footer>
    </main>
</body>

</html>
```
FILE: styles.css
```css
* {
    box-sizing: border-box;
}

body {
    margin: 0;
    height: 100vh;
    padding: 76px 112px 148px;
    background: #fdfdfd;
    font-family: "Open Sans", "Noto Sans", sans-serif;
    font-size: 23px;
    color: #2e2e2e;
    overflow: hidden;
}

h1, h2, ul, ol {
    margin: 0;
    padding: 0;
    font-weight: normal;
    list-style: none;
}

button {
    display: flex;
    align-items: center;
    justify-content: center;
    padding: 0;
    border: 0;
    background: none;
    font: inherit;
    color: inherit;
    cursor: pointer;
}

svg {
    display: block;
}

.sprite {
    position: absolute;
    width: 0;
    height: 0;
}

.caret {
    border: 6px solid transparent;
    border-top: 10px solid currentColor;
    border-bottom: 0;
}

.window {
    display: flex;
    flex-direction: column;
    height: 100%;
    border-radius: 24px;
    overflow: hidden;
    background: #f0f0f0;
    box-shadow: 0 0 2px rgba(0, 0, 0, .5), 0 0 50px rgba(0, 0, 0, .12), 0 40px 70px rgba(0, 0, 0, .42);
}

/* title bar */
.titlebar {
    display: flex;
    align-items: center;
    height: 56px;
    padding: 0 16px;
    background: #f7f7f7;
    border-bottom: 2px solid #b5b5b5;
}

.lights {
    display: flex;
    gap: 16px;
    width: 120px;
}

.lights i {
    width: 24px;
    height: 24px;
    border-radius: 50%;
    background: #dedede;
    border: 1px solid #cbcbcb;
}

.titlebar h1 {
    flex: 1;
    padding-right: 130px;
    text-align: center;
    font: 700 26px/32px Inter, sans-serif;
    color: #454545;
}

/* document tabs */
.strip {
    display: flex;
    align-items: flex-end;
    height: 64px;
    background: #c9c9c9;
}

.quick {
    display: flex;
    align-items: center;
    width: 389px;
    height: 64px;
    padding-left: 16px;
    color: #5f5f5f;
}

.quick button {
    width: 66px;
    gap: 10px;
    justify-content: flex-start;
}

.quick .drop {
    width: 91px;
}

.quick .step {
    width: 76px;
}

.quick svg {
    width: 32px;
    height: 32px;
}

.quick .dim {
    color: #8d8d8d;
}

.tile {
    height: 56px;
    background: #b7b7b7;
}

.tile svg {
    width: 32px;
    height: 32px;
}

.home {
    width: 82px;
    margin-right: 3px;
}

.file-tab {
    flex: 1;
    display: flex;
    align-items: center;
    justify-content: center;
    gap: 8px;
    height: 56px;
    margin-right: 6px;
    padding-left: 12px;
    background: #b8b8b8;
    font-size: 25px;
    color: #676767;
}

.file-tab.active {
    background: #f0f0f0;
    color: #333;
}

.file-tab .doc {
    width: 30px;
    height: 32px;
    margin-left: auto;
}

.file-tab .close {
    margin-left: auto;
    margin-right: 14px;
}

.close svg {
    width: 18px;
    height: 18px;
}

.new {
    width: 54px;
    margin-left: 5px;
}

.new svg {
    width: 26px;
    height: 26px;
}

.account {
    display: flex;
    align-items: center;
    gap: 27px;
    width: 410px;
    height: 64px;
    padding: 0 27px 0 23px;
}

.account svg {
    width: 34px;
    height: 34px;
}

.jobs {
    width: 88px;
    height: 48px;
    gap: 8px;
    padding-right: 22px;
    border-radius: 8px;
    background: #969696;
    color: #fff;
}

.avatar {
    width: 50px;
    height: 50px;
    margin-left: auto;
    border-radius: 50%;
    background: #f4f4f4;
    font-size: 25px;
}

/* ribbon */
.toolbar {
    display: flex;
    height: 170px;
    background: #f0f0f0;
    border-bottom: 4px solid #e2e2e2;
}

.workspace {
    width: 220px;
    height: 122px;
    margin: 20px 0 0 24px;
    gap: 12px;
    border: 2px solid #c9c9c9;
    border-radius: 8px;
    font-size: 22px;
    font-weight: 600;
}

.ribbon {
    flex: 1;
}

.tabs {
    display: flex;
    gap: 38px;
    padding-left: 32px;
}

.tabs a {
    padding: 6px 25px 5px;
    border-bottom: 6px solid transparent;
    line-height: 30px;
    color: inherit;
    text-decoration: none;
}

.tabs .on {
    color: #0a8fc4;
    border-color: #0a96c8;
}

.groups {
    display: flex;
    padding-left: 8px;
}

.group {
    display: flex;
    flex-direction: column;
    align-items: center;
    padding: 0 21px;
}

.group.roomy {
    padding: 0 28px;
}

.group:not(:last-child) {
    border-right: 2px solid #d2d2d2;
}

.icons {
    display: flex;
    align-items: center;
    gap: 22px;
    height: 78px;
}

.icons svg {
    width: 64px;
    height: 64px;
}

.icons .big svg {
    width: 76px;
    height: 76px;
}

.menu {
    gap: 4px;
    padding: 0 6px;
    line-height: 32px;
}

/* viewport */
.viewport {
    position: relative;
    flex: 1;
    min-height: 0;
    display: flex;
    padding: 8px 8px 10px;
    background: #475369;
}

.scene {
    position: absolute;
    left: 0;
    top: 0;
    width: 100%;
    height: 100%;
}

.grid-labels {
    font-size: 9px;
    fill: #98a3a6;
}

.cube-text {
    font-size: 16px;
    fill: #4d4e5e;
}

.axis-text {
    font-size: 24px;
    font-weight: 600;
}

.panels {
    position: relative;
    display: flex;
    flex-direction: column;
    width: 600px;
}

.panel-head {
    display: flex;
    align-items: center;
    height: 50px;
    padding: 0 21px 0 9px;
    background: #f0f0f0;
    border: 2px solid #fbfbff;
    color: #505050;
}

.panel-head h2 {
    flex: 1;
    margin-left: 18px;
    font-size: 22px;
}

.panel-head svg {
    width: 20px;
    height: 20px;
}

.comments {
    margin-top: auto;
}

.comments h2 {
    margin-left: 38px;
}

.browser {
    display: flex;
    margin-top: 10px;
}

.rail {
    width: 12px;
    height: 722px;
    margin: 0 88px 0 8px;
    background: #64727b;
    opacity: .9;
}

#tree {
    display: flex;
    flex-direction: column;
    gap: 8px;
}

#tree li {
    display: flex;
    align-items: center;
    height: 40px;
}

#tree .child {
    padding-left: 72px;
}

.arrow {
    width: 36px;
    justify-content: flex-start;
}

.arrow svg {
    width: 16px;
    height: 24px;
}

.chip {
    display: flex;
    align-items: center;
    height: 40px;
    padding: 0 22px 0 6px;
    background: #f0f0f2;
    box-shadow: 0 1px 3px rgba(20, 20, 40, .6);
    white-space: nowrap;
}

.child .chip {
    padding-right: 18px;
}

.chip svg {
    width: 32px;
    height: 32px;
}

.chip .vis {
    margin-right: 18px;
}

.chip .kind {
    margin-right: 28px;
}

.chip .kind.tight {
    width: 28px;
    margin-right: 24px;
}

.chip .warning {
    margin: 0 -6px 0 26px;
}

.navbar {
    position: absolute;
    left: 50%;
    bottom: 13px;
    transform: translateX(-50%);
    display: flex;
    align-items: center;
    justify-content: space-between;
    width: 476px;
    height: 48px;
    padding: 0 8px;
    background: #f2f2f2;
}

.navbar button {
    gap: 6px;
}

.navbar svg {
    width: 30px;
    height: 30px;
}

.assistant {
    position: absolute;
    right: 26px;
    bottom: 11px;
    width: 32px;
    height: 32px;
    border-radius: 16px 16px 2px 16px;
    background: #000;
    outline: 1px solid #8a9298;
}

/* timeline */
.timeline {
    height: 100px;
    padding-top: 5px;
    background: #f0f0f0;
}

.scroll {
    width: 980px;
    height: 14px;
    margin-left: 8px;
    border-radius: 3px;
    background: #c8c8c8;
}

.track {
    display: flex;
    padding-left: 16px;
}

.player {
    display: flex;
    align-items: center;
    gap: 14px;
    width: 244px;
    height: 80px;
    margin-right: 24px;
}

.player svg {
    width: 36px;
    height: 28px;
}

#features {
    display: flex;
}

#features li {
    position: relative;
    width: 48px;
    height: 70px;
    border-bottom: 3px solid #c4c4c4;
}

#features li::after {
    content: "";
    position: absolute;
    left: 24px;
    bottom: 0;
    width: 3px;
    height: 12px;
    background: #c4c4c4;
}

#features button {
    width: 48px;
    height: 48px;
    margin-top: 7px;
}

#features svg {
    width: 34px;
    height: 34px;
}

#features .mark button {
    background: #e3ec12;
    border-radius: 3px;
}

#features .mark::after {
    content: "+";
    left: 12px;
    bottom: -8px;
    width: 19px;
    height: 19px;
    background: #777;
    color: #fff;
    font-weight: bold;
    line-height: 18px;
    text-align: center;
}

.settings {
    margin: 0 28px 0 auto;
    height: 80px;
}

.settings svg {
    width: 30px;
    height: 30px;
}
```
FILE: script.js
```js
const NS = "http://www.w3.org/2000/svg";

function icon(name, cls) {
    return `<svg class="${cls || ""}"><use href="#${name}"/></svg>`;
}

// browser tree: [label, eye (1 on, 0 off, null none), icon, arrow]
const rows = [
    ["Document Settings", null, "gear", "closed"],
    ["Origin", 0, "folder", "closed"],
    ["Bodies", 1, "folder", "opened"],
    ["servo_MG90S", 0, "mesh"],
    ["servo_MG90S (1)", 1, "mesh"],
    ["Body1", 1, "body"],
    ["helper_arm", 0, "body"],
    ["missile_servo_arm", 0, "body"],
    ["Body4", 0, "body"],
    ["Body5", 1, "body"],
    ["Body6", 1, "body"],
    ["helper_arm (1)", 0, "body"],
    ["Body8", 1, "body"],
    ["Body9", 1, "body"],
    ["helper_arm (1) (1) (1)", 0, "body"],
    ["helper_arm (1) (1) (1) (1)", 0, "body"],
    ["Body13", 1, "body"],
    ["Body14", 1, "body"],
    ["Body16", 0, "body"],
    ["Body40", 0, "body"],
    ["Body41", 0, "body"],
    ["Body42", 0, "body"],
    ["Body43", 0, "body"],
    ["Body44", 0, "body"],
    ["Body45", 0, "body"],
    ["Body46", 0, "body"],
    ["Sketches", 0, "folder", "closed"],
    ["Construction", 0, "folder", "closed"],
    ["Assembly Contexts", null, "folder", "closed"],
    ["Missile_mech_arms v1:1", 0, "ground", "closed"]
];

document.getElementById("tree").innerHTML = rows.map(([label, eye, kind, arrow]) => `
    <li class="${arrow ? "" : "child"}">
        ${arrow ? `<button type="button" class="arrow" aria-label="Toggle">${icon(arrow)}</button>` : ""}
        <div class="chip">
            ${eye === null ? "" : icon(eye ? "eye" : "eye-off", "vis")}
            ${icon(kind, kind === "gear" ? "kind tight" : "kind")}
            <span>${label}</span>
            ${kind === "mesh" ? icon("warn", "warning") : ""}
        </div>
    </li>`).join("");

// timeline features, one letter each
const kinds = {
    s: "sketch", p: "plane", l: "loft", t: "thicken", a: "axis", e: "extrude", o: "extrude-cut",
    r: "repeat", m: "move", c: "combine", f: "fillet", k: "link", n: "snap", b: "base"
};
const order = "spsltaserse" + "mcsesefaseeeeeeeas" + "eeeeeeeaseasekn" + "kltee" + "sotspsbbmspslts";

document.getElementById("features").innerHTML = [...order].map(k => `
    <li class="${k === "r" ? "mark" : ""}"><button type="button" aria-label="${kinds[k]}">${icon(kinds[k])}</button></li>`).join("");

// ground grid
const grid = document.getElementById("gridLines");

function line(x1, y1, x2, y2, color, opacity, width, dash) {
    const el = document.createElementNS(NS, "path");
    el.setAttribute("d", `M${x1} ${y1}L${x2} ${y2}`);
    el.setAttribute("stroke", color);
    el.setAttribute("stroke-opacity", opacity);
    el.setAttribute("stroke-width", width);
    if (dash) el.setAttribute("stroke-dasharray", dash);
    grid.appendChild(el);
}

const edge = [[1432, 394], [1624, 449], [1828, 509], [2046, 570], [2278, 637], [2527, 708], [2794, 785], [3081, 867], [3390, 955], [3729, 1052], [4095, 1157]];
const foot = [-2193, -1603, -1013, -423, 167, 757, 1354, 1941, 2533, 3121, 3709];
const cross = [6985, 6341, 5559, 4780, 4000, 3212, 2418, 1628, 831, 37, -757];
const vanish = [-4490, -1300];

function crossLine(x, major) {
    const slope = (1982 - vanish[1]) / (x - vanish[0]);
    // start on the left border of the grid
    const sx = (385 + .4228 * 1401 - 1982 + slope * x) / (slope + .4228);
    const sy = 1982 - slope * (x - sx);
    line(sx, sy, x, 1982, major ? "#8b9c7c" : "#8a9a84", major ? .55 : .2, 2, major ? "" : "14 20");
}

for (let i = 0; i < edge.length; i++) {
    line(edge[i][0], edge[i][1], foot[i], 1982, "#8b9c7c", .55, 2);
    if (i > 0) crossLine(cross[i], true);
    if (i === edge.length - 1) break;
    for (let j = 1; j < 5; j++) {
        const t = j / 5;
        const mix = (a, b) => a + (b - a) * t;
        line(mix(edge[i][0], edge[i + 1][0]), mix(edge[i][1], edge[i + 1][1]), mix(foot[i], foot[i + 1]), 1982, "#8a9a84", .2, 2, "14 20");
        crossLine(mix(cross[i], cross[i + 1]), false);
    }
}
line(1401, 385, -2376, 1982, "#a9b5a4", .8, 2);
line(1401, 385, 4063, 1146, "#a9b5a4", .8, 2);

// labels sit just past the end of each major line
document.getElementById("gridLabels").innerHTML = edge.slice(0, 9).map(([ex, ey], i) => {
    const x = Math.round(ex / 2.347 + 2);
    const y = Math.round(ey / 2.347 + 1);
    return `<text x="${x}" y="${y}" transform="rotate(-18 ${x} ${y})">${500 - i * 50}</text>`;
}).join("");
```
